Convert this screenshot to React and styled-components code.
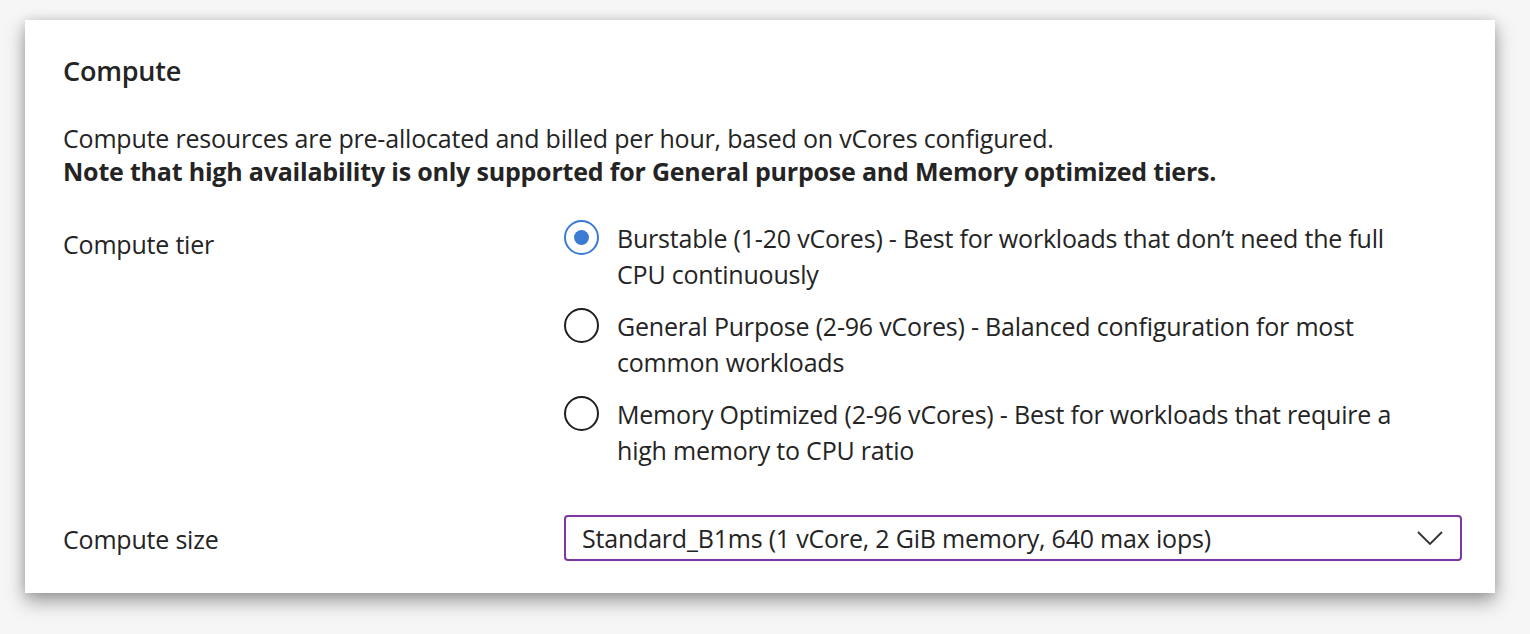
import React, { useState } from "react";
import styled, { createGlobalStyle } from "styled-components";

const Global = createGlobalStyle`
  html, body { margin: 0; padding: 0; background: #f6f6f6; }
  body { font-family: "Open Sans", "Noto Sans", sans-serif; color: #242424; }
  * { box-sizing: border-box; }
`;

const Page = styled.div`
  padding: 20px 35px 41px 25px;
`;

const Card = styled.section`
  background: #fff;
  width: 1470px;
  height: 573px;
  padding: 36px 38px 32px 38px;
  box-shadow: 0 8px 18px rgba(0, 0, 0, 0.38), 0 0 10px rgba(0, 0, 0, 0.1);
`;

const Heading = styled.h2`
  margin: 0;
  font-size: 27px;
  line-height: 30px;
  font-weight: 600;
  letter-spacing: -0.2px;
`;

const Description = styled.p`
  margin: 36px 0 0;
  font-size: 25px;
  line-height: 33px;
  letter-spacing: -0.2px;
`;

const Strong = styled.strong`
  font-weight: 700;
  display: block;
`;

const FieldRow = styled.div`
  display: grid;
  grid-template-columns: 501px 898px;
  align-items: ${(p) => p.$align || "start"};
  margin-top: ${(p) => p.$top}px;
`;

const Label = styled.div`
  font-size: 25px;
  line-height: 36px;
  padding-top: ${(p) => p.$pad || 0}px;
  letter-spacing: -0.2px;
`;

const RadioList = styled.div`
  display: flex;
  flex-direction: column;
  gap: 16px;
`;

const Option = styled.label`
  display: flex;
  align-items: flex-start;
  gap: 18px;
  cursor: pointer;
`;

const Circle = styled.span`
  flex: none;
  width: 35px;
  height: 35px;
  border-radius: 50%;
  border: 2px solid ${(p) => (p.$checked ? "#3b7bd4" : "#1f1f1f")};
  display: flex;
  align-items: center;
  justify-content: center;
  &::after {
    content: "";
    width: 15px;
    height: 15px;
    border-radius: 50%;
    background: #3b7bd4;
    display: ${(p) => (p.$checked ? "block" : "none")};
  }
`;

const OptionText = styled.span`
  font-size: 25px;
  line-height: 36px;
  max-width: 795px;
  letter-spacing: -0.2px;
`;

const Select = styled.div`
  height: 46px;
  border: 2px solid #7c38a0;
  border-radius: 4px;
  display: flex;
  align-items: center;
  justify-content: space-between;
  padding: 0 16px 0 16px;
  font-size: 25px;
  letter-spacing: -0.2px;
`;

const options = [
  "Burstable (1-20 vCores) - Best for workloads that don\u2019t need the full CPU continuously",
  "General Purpose (2-96 vCores) - Balanced configuration for most common workloads",
  "Memory Optimized (2-96 vCores) - Best for workloads that require a high memory to CPU ratio",
];

export default function App() {
  const [sel, setSel] = useState(0);
  return (
    <>
      <Global />
      <Page>
        <Card>
          <Heading>Compute</Heading>
          <Description>
            Compute resources are pre-allocated and billed per hour, based on vCores configured.
            <Strong>
              Note that high availability is only supported for General purpose and Memory optimized tiers.
            </Strong>
          </Description>
          <FieldRow $top={32}>
            <Label $pad={6}>Compute tier</Label>
            <RadioList>
              {options.map((o, i) => (
                <Option key={i} onClick={() => setSel(i)}>
                  <Circle $checked={sel === i} />
                  <OptionText>{o}</OptionText>
                </Option>
              ))}
            </RadioList>
          </FieldRow>
          <FieldRow $top={47} $align="center">
            <Label $pad={2}>Compute size</Label>
            <Select>
              <span>Standard_B1ms (1 vCore, 2 GiB memory, 640 max iops)</span>
              <svg width="28" height="16" viewBox="0 0 28 16" fill="none">
                <path d="M2 2 L14 14 L26 2" stroke="#333" strokeWidth="1.8" />
              </svg>
            </Select>
          </FieldRow>
        </Card>
      </Page>
    </>
  );
}
